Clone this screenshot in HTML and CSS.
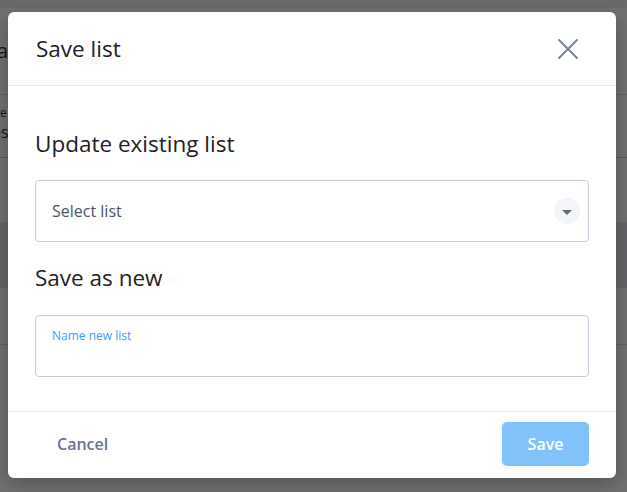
FILE: index.html
```html
<!DOCTYPE html>
<html>
<head>
<meta charset="utf-8">
<link rel="stylesheet" href="styles.css">
</head>
<body>
<div class="page">
  <div class="page-top"></div>
  <div class="page-title">la</div>
  <div class="page-row">ve</div>
  <div class="page-row2">es</div>
  <div class="page-block"></div>
  <div class="page-line"></div>
</div>
<div class="overlay">
  <div class="modal">
    <div class="modal-header">
      <h2 class="modal-title">Save list</h2>
      <button class="close" aria-label="Close">
        <svg width="20" height="20" viewBox="0 0 20 20"><path d="M1 1L19 19M19 1L1 19" stroke="#7a839c" stroke-width="2" stroke-linecap="round" fill="none"/></svg>
      </button>
    </div>
    <div class="modal-body">
      <h3 class="section-title">Update existing list</h3>
      <div class="select">
        <span class="select-text">Select list</span>
        <span class="select-btn"><span class="tri"></span></span>
      </div>
      <h3 class="section-title second">Save as new</h3>
      <div class="input">
        <span class="input-label">Name new list</span>
      </div>
    </div>
    <div class="modal-footer">
      <button class="cancel">Cancel</button>
      <button class="save">Save</button>
    </div>
  </div>
</div>
</body>
</html>
```

FILE: styles.css
```css
html, body {
  margin: 0;
  padding: 0;
  width: 627px;
  height: 492px;
  overflow: hidden;
  font-family: "Open Sans", "Noto Sans", sans-serif;
}
.page {
  position: absolute;
  inset: 0;
  background: #ffffff;
}
.page-top { height: 8px; background: #f2f2f2; }
.page-title {
  margin-left: -8px;
  font-size: 20px;
  color: #333;
  line-height: 86px;
  border-bottom: 1px solid #ddd;
  box-sizing: border-box;
  height: 87px;
}
.page-row { margin-left: -6px; font-size: 12px; color: #333; padding-top: 10px; height: 16px; line-height: 16px; }
.page-row2 { margin-left: -8px; font-size: 16px; color: #333; height: 36px; line-height: 22px; border-bottom: 1px solid #ccc; }
.page-block { margin-top: 64px; height: 66px; background: #e2e6ec; }
.page-line { margin-top: 56px; height: 1px; background: #ddd; }
.overlay {
  position: absolute;
  inset: 0;
  background: rgba(0, 0, 0, 0.56);
  display: flex;
  align-items: flex-start;
  justify-content: flex-start;
  padding: 12px 0 0 8px;
}
.modal {
  width: 608px;
  height: 466px;
  background: #fff;
  border-radius: 6px;
  box-shadow: 0 6px 20px rgba(0,0,0,0.25);
  display: flex;
  flex-direction: column;
}
.modal-header {
  height: 73px;
  border-bottom: 1px solid #e8e9ec;
  display: flex;
  align-items: center;
  justify-content: space-between;
  padding: 0 38px 0 28px;
}
.modal-title {
  margin: 0;
  font-size: 22.5px;
  font-weight: 400;
  color: #1f2125;
}
.close {
  border: 0;
  background: none;
  padding: 0;
  width: 20px;
  height: 20px;
  display: flex;
}
.modal-body {
  flex: 1;
  padding: 0 27px 0 27px;
}
.section-title {
  margin: 0;
  font-size: 22.5px;
  font-weight: 400;
  color: #1f2125;
  padding-top: 43px;
  line-height: 30px;
}
.section-title.second {
  padding-top: 21px;
}
.select {
  margin-top: 21px;
  box-sizing: border-box;
  height: 62px;
  border: 1px solid #c7cdda;
  border-radius: 4px;
  display: flex;
  align-items: center;
  justify-content: space-between;
  padding: 0 8px 0 16px;
}
.select-text {
  font-size: 16px;
  color: #4b5366;
}
.select-btn {
  width: 26px;
  height: 26px;
  border-radius: 50%;
  background: #f4f5f9;
  display: flex;
  align-items: center;
  justify-content: center;
}
.tri {
  width: 0;
  height: 0;
  border-left: 5px solid transparent;
  border-right: 5px solid transparent;
  border-top: 5px solid #666b74;
  margin-top: 2px;
}
.input {
  margin-top: 22px;
  box-sizing: border-box;
  height: 62px;
  border: 1px solid #c7cdda;
  border-radius: 4px;
  padding: 7px 16px 0;
}
.input-label {
  font-size: 12px;
  color: #3ba0f7;
}
.modal-footer {
  height: 67px;
  box-sizing: border-box;
  padding: 0 27px 2px 27px;
  border-top: 1px solid #e8e9ec;
  display: flex;
  align-items: center;
  justify-content: space-between;
}
.cancel {
  border: 0;
  background: none;
  font-family: inherit;
  font-size: 16px;
  font-weight: 600;
  color: #6b7390;
  padding: 0 22px;
  height: 44px;
}
.save {
  border: 0;
  background: #80c2f9;
  color: #fff;
  font-family: inherit;
  font-size: 16px;
  font-weight: 600;
  width: 87px;
  height: 44px;
  border-radius: 5px;
}
```
